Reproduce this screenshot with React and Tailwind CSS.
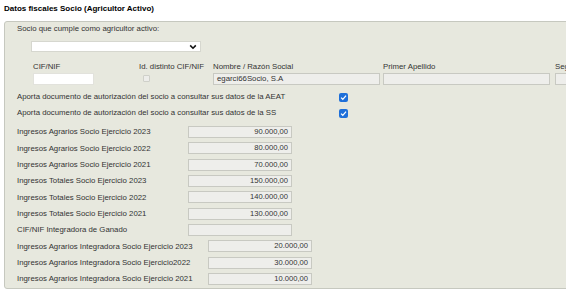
import React from "react"

const font = { fontFamily: '"Liberation Sans", Arial, sans-serif' }

const Check = () => (
  <div className="w-[9px] h-[9px] rounded-[2px] bg-[#1e6fd9] flex items-center justify-center">
    <svg width="7" height="7" viewBox="0 0 10 10">
      <path d="M1.5 5.2 L4 7.6 L8.6 2.4" fill="none" stroke="#fff" strokeWidth="1.8" />
    </svg>
  </div>
)

const Field = ({ value = "", w = "w-[104px]" }) => (
  <div className={`${w} h-[12px] bg-[#eeeeeb] border border-[#c8c9c2] text-right pr-[3px] leading-[10px] text-[7.6px] text-[#333]`}>
    {value}
  </div>
)

const rows = [
  { label: "Ingresos Agrarios Socio Ejercicio 2023", value: "90.000,00", off: "ml-[171px]" },
  { label: "Ingresos Agrarios Socio Ejercicio 2022", value: "80.000,00", off: "ml-[171px]" },
  { label: "Ingresos Agrarios Socio Ejercicio 2021", value: "70.000,00", off: "ml-[171px]" },
  { label: "Ingresos Totales Socio Ejercicio 2023", value: "150.000,00", off: "ml-[171px]" },
  { label: "Ingresos Totales Socio Ejercicio 2022", value: "140.000,00", off: "ml-[171px]" },
  { label: "Ingresos Totales Socio Ejercicio 2021", value: "130.000,00", off: "ml-[171px]" },
  { label: "CIF/NIF Integradora de Ganado", value: "", off: "ml-[171px]" },
  { label: "Ingresos Agrarios Integradora Socio Ejercicio 2023", value: "20.000,00", off: "ml-[191px]" },
  { label: "Ingresos Agrarios Integradora Socio Ejercicio2022", value: "30.000,00", off: "ml-[191px]" },
  { label: "Ingresos Agrarios Integradora Socio Ejercicio 2021", value: "10.000,00", off: "ml-[191px]" },
]

export default function App() {
  return (
    <div className="w-[566px] h-[295px] bg-white overflow-hidden text-[#333]" style={font}>
      <div className="pl-[4px] pt-[4px]">
        <h2 className="h-[10px] leading-[10px] text-[8px] font-bold text-black">
          Datos fiscales Socio (Agricultor Activo)
        </h2>
        <div className="mt-[7px] w-[660px] h-[268px] bg-[#e7e8de] border border-[#c6c8bf] rounded-[3px] pl-[12px] text-[7.8px]">
          <div className="h-[14px] leading-[14px]">Socio que cumple como agricultor activo:</div>

          <div className="mt-[5px] ml-[14px] w-[170px] h-[11px] bg-white border border-[#d6d7cf] flex items-center justify-end pr-[3px]">
            <svg width="8" height="6" viewBox="0 0 10 6">
              <path d="M1.5 1 L5 4.5 L8.5 1" fill="none" stroke="#111" strokeWidth="2" />
            </svg>
          </div>

          <div className="mt-[8px] ml-[16px] flex">
            <div className="w-[106px] shrink-0">
              <div className="h-[13px] leading-[13px]">CIF/NIF</div>
              <div className="w-[61px] h-[12px] bg-white border border-[#e2e2dc]" />
            </div>
            <div className="w-[74px] shrink-0">
              <div className="h-[13px] leading-[13px] whitespace-nowrap">Id. distinto CIF/NIF</div>
              <div className="ml-[4px] mt-[2px] w-[7px] h-[7px] border border-[#cfd0c9] bg-[#ededea] rounded-[1px]" />
            </div>
            <div className="w-[170px] shrink-0">
              <div className="h-[13px] leading-[13px]">Nombre / Razón Social</div>
              <div className="w-[167px] h-[12px] bg-[#eeeeeb] border border-[#c8c9c2] pl-[3px] leading-[10px]">egarci66Socio, S.A</div>
            </div>
            <div className="w-[172px] shrink-0">
              <div className="h-[13px] leading-[13px]">Primer Apellido</div>
              <div className="w-[167px] h-[12px] bg-[#eeeeeb] border border-[#c8c9c2]" />
            </div>
            <div className="w-[100px] shrink-0">
              <div className="h-[13px] leading-[13px] whitespace-nowrap">Segundo Apellido</div>
              <div className="w-[90px] h-[12px] bg-[#eeeeeb] border border-[#c8c9c2]" />
            </div>
          </div>

          <div className="mt-[4px] h-[16px] flex items-center">
            <span className="w-[322px]">Aporta documento de autorización del socio a consultar sus datos de la AEAT</span>
            <Check />
          </div>
          <div className="h-[16px] flex items-center">
            <span className="w-[322px]">Aporta documento de autorización del socio a consultar sus datos de la SS</span>
            <Check />
          </div>

          <div className="mt-[3px]">
            {rows.map((r) => (
              <div key={r.label} className="h-[16.33px] flex items-center">
                <span className="w-0 whitespace-nowrap">{r.label}</span>
                <div className={r.off}>
                  <Field value={r.value} />
                </div>
              </div>
            ))}
          </div>
        </div>
      </div>
    </div>
  )
}
